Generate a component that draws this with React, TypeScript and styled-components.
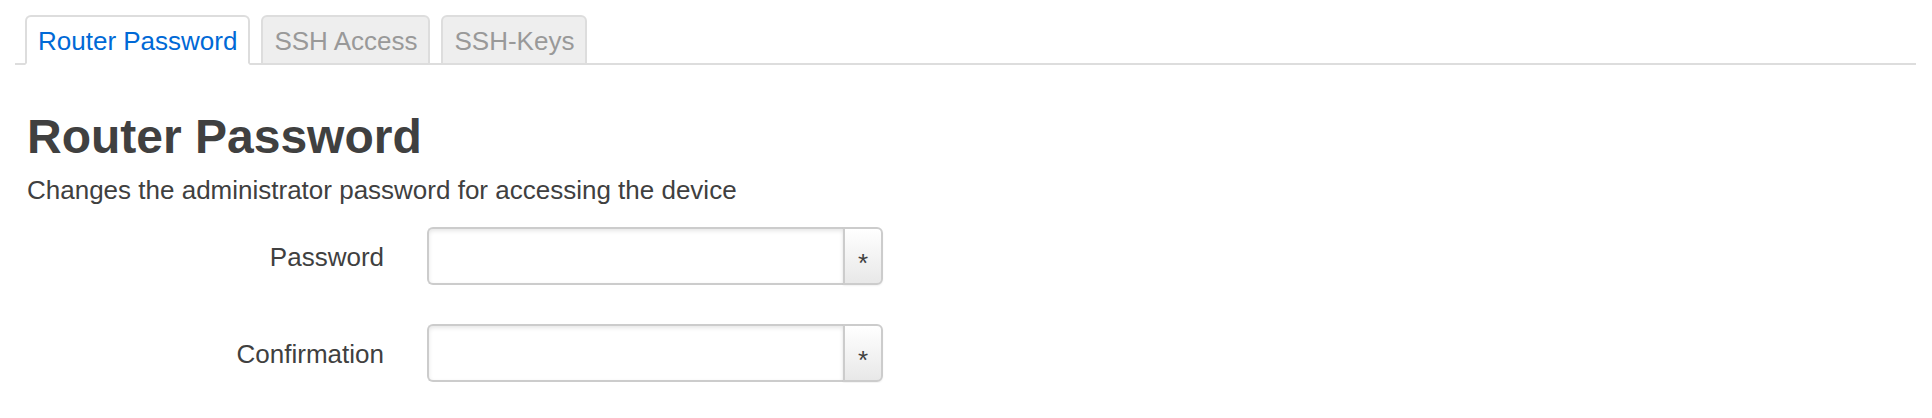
import React from "react";
import styled, { createGlobalStyle } from "styled-components";

const Global = createGlobalStyle`
  html, body {
    margin: 0;
    padding: 0;
    background: #ffffff;
  }
  body {
    font-family: "Liberation Sans", Arial, Helvetica, sans-serif;
    font-size: 26px;
    color: #404040;
  }
  * { box-sizing: border-box; }
`;

const Page = styled.div`
  padding: 15px 16px 0 15px;
`;

const TabList = styled.ul`
  display: flex;
  list-style: none;
  margin: 0;
  padding: 0 0 0 10px;
  border-bottom: 2px solid #ddd;
`;

const Tab = styled.li<{ $active?: boolean }>`
  height: 50px;
  margin-bottom: -2px;
  margin-right: 11px;
  padding: 2px 11px 0;
  line-height: 44px;
  border: 2px solid #ddd;
  border-bottom-color: ${(p) => (p.$active ? "transparent" : "#ddd")};
  border-radius: 6px 6px 0 0;
  background: ${(p) => (p.$active ? "#ffffff" : "#eeeeee")};
  color: ${(p) => (p.$active ? "#0069d6" : "#999999")};
  white-space: nowrap;
  cursor: pointer;
`;

const Content = styled.div`
  padding-left: 12px;
`;

const Heading = styled.h2`
  margin: 46px 0 0;
  font-size: 48px;
  line-height: 52.8px;
  font-weight: bold;
  color: #404040;
`;

const Description = styled.p`
  margin: 7px 0 0;
  font-size: 26px;
  line-height: 39px;
`;

const Form = styled.div`
  display: grid;
  grid-template-columns: 357px 456px;
  column-gap: 43px;
  row-gap: 38px;
  margin-top: 17px;
`;

const Label = styled.label`
  text-align: right;
  line-height: 58px;
  padding-top: 1px;
  color: #404040;
`;

const InputGroup = styled.div`
  display: flex;
  height: 58px;
`;

const Input = styled.input`
  flex: 1;
  min-width: 0;
  height: 58px;
  border: 2px solid #ccc;
  border-right: none;
  border-radius: 6px 0 0 6px;
  box-shadow: inset 0 2px 4px rgba(0, 0, 0, 0.1);
  font-family: inherit;
  font-size: 26px;
  padding: 0 10px;
  outline: none;
  background: #fff;
`;

const Addon = styled.button`
  width: 40px;
  height: 58px;
  border: 2px solid #ccc;
  border-radius: 0 6px 6px 0;
  background: linear-gradient(#ffffff, #e8e8e8);
  box-shadow: 0 1px 2px rgba(0, 0, 0, 0.06);
  color: #404040;
  font-family: "Liberation Sans", Arial, sans-serif;
  font-size: 26px;
  padding: 14px 0 0;
  line-height: 1;
  cursor: pointer;
`;

const fields = ["Password", "Confirmation"];

export default function App() {
  return (
    <Page>
      <Global />
      <TabList>
        <Tab $active>Router Password</Tab>
        <Tab>SSH Access</Tab>
        <Tab>SSH-Keys</Tab>
      </TabList>
      <Content>
        <Heading>Router Password</Heading>
        <Description>Changes the administrator password for accessing the device</Description>
        <Form>
          {fields.map((f) => (
            <React.Fragment key={f}>
              <Label>{f}</Label>
              <InputGroup>
                <Input type="password" />
                <Addon type="button">*</Addon>
              </InputGroup>
            </React.Fragment>
          ))}
        </Form>
      </Content>
    </Page>
  );
}
